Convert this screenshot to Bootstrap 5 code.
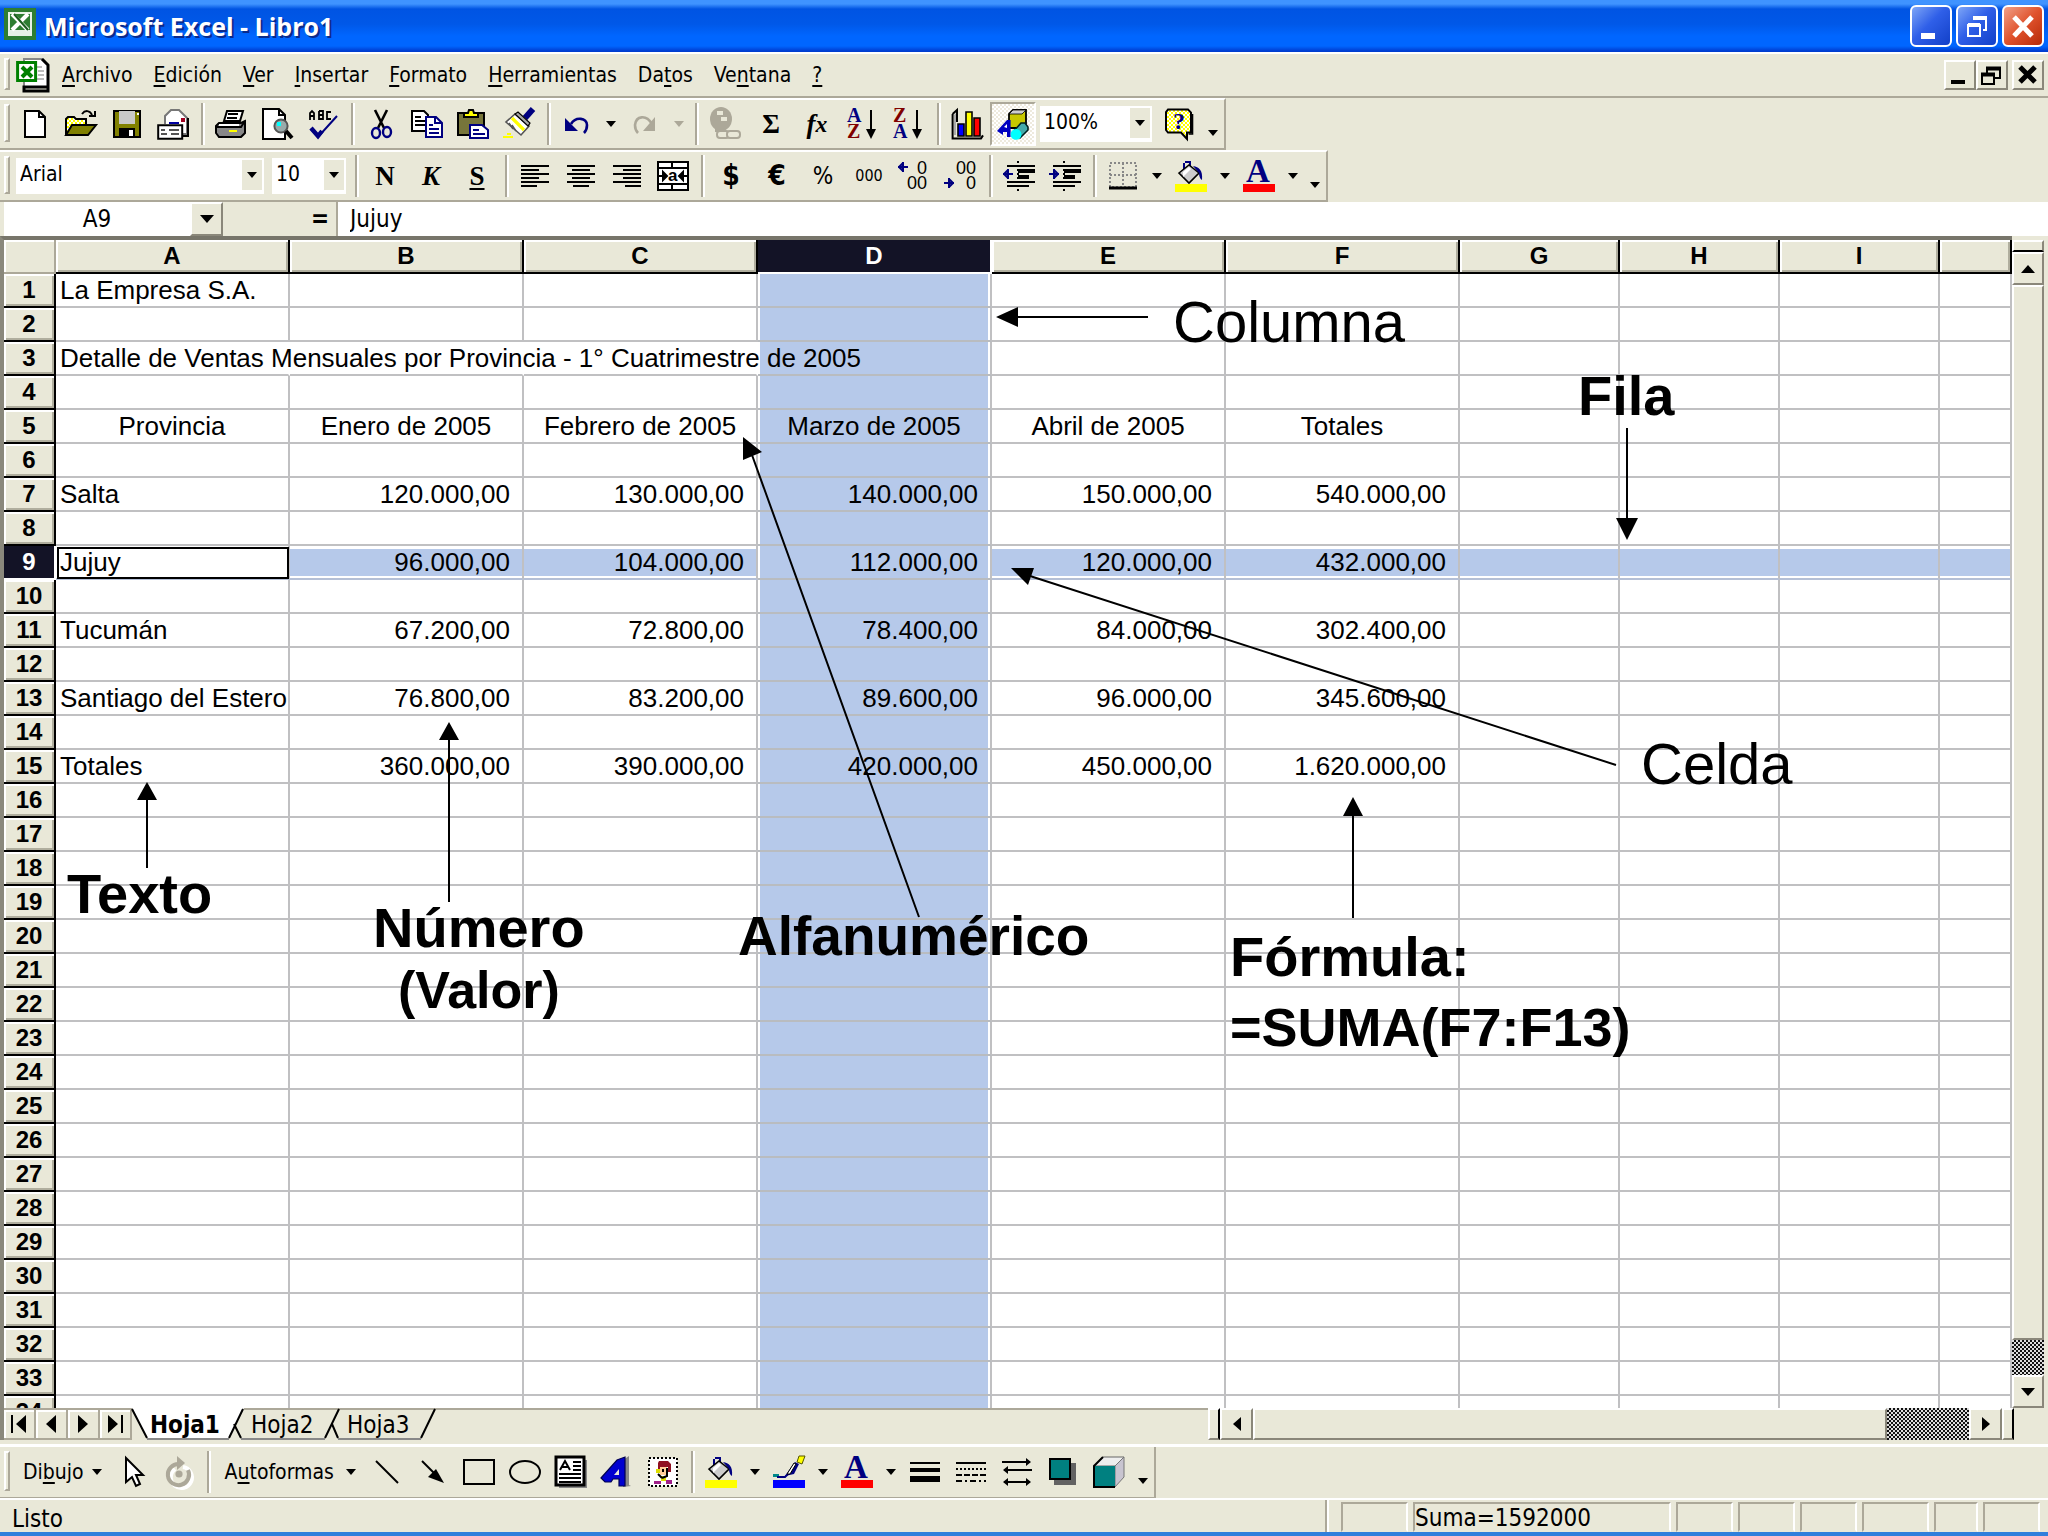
<!DOCTYPE html>
<html lang="es">
<head>
<meta charset="utf-8">
<meta name="viewport" content="width=device-width, initial-scale=1">
<title>Microsoft Excel - Libro1</title>
<link href="https://cdn.jsdelivr.net/npm/bootstrap@5.3.0/dist/css/bootstrap.min.css" rel="stylesheet">
<style>
:root{--face:#e9e8d8;--dark:#aca899;--sel:#b6c9ea;--line:#c0c0c2;--ui:"DejaVu Sans Condensed","DejaVu Sans",sans-serif;--arial:"Liberation Sans",Arial,sans-serif}
body{background:var(--face);color:#000;font:21px/24px var(--ui);height:100vh;overflow:hidden}
button,select,input{font-family:inherit;color:#000}
svg{display:block;flex:none;overflow:visible}
.pix{width:32px;height:32px}
/* title bar */
.titlebar{height:52px;background:linear-gradient(#3f93ff 0 4px,#0054e3 9px,#0058e8 24px,#0066ff 36px,#0066ff 46px,#003dd0 51px);padding:0 4px}
.titlebar h1{font:bold 25px/30px "Open Sans","Noto Sans",sans-serif;color:#fff;text-shadow:2px 2px 0 #0a2a8c}
.winbtn{width:42px;height:42px;border:2px solid #fff;border-radius:6px;padding:0;background:linear-gradient(135deg,#7ea6f7,#2f5fe8 45%,#1240c8)}
.winbtn.shut{background:linear-gradient(135deg,#f0a088,#e0522c 50%,#b52a08)}
.winbtn svg,.mdibtn svg{margin:auto}
/* menu */
.menubar{height:46px;border-top:2px solid #fff;border-bottom:2px solid var(--dark);padding:0 4px}
.menulinks{column-gap:21px}
.menubar a{color:#000;text-decoration:none}
.menubar u,.tb u{text-decoration-thickness:2px;text-underline-offset:3px}
.mdibtn,.raised{border:2px solid;border-color:#fff #8a877a #8a877a #fff;background:var(--face);padding:0;border-radius:0}
.mdibtn{width:32px;height:30px}
.grip{width:6px;align-self:stretch;margin:4px 2px 6px 4px;border:2px solid;border-color:#fff var(--dark) var(--dark) #fff;flex:none}
.toolbar{height:52px;border-top:2px solid #fff;border-bottom:2px solid var(--dark);border-right:2px solid var(--dark)}
.tb{width:46px;height:44px;padding:0;border:0;border-radius:0;background:none;display:flex;align-items:center;justify-content:center;flex:none;font-size:21px;line-height:24px}
.tb.arrowed{width:22px}
.tb.low{padding-top:18px}
.tb.wide{width:auto;padding:0 8px 0 11px;gap:8px}
.tb.wide.auto{gap:12px}
.tb.on{background:repeating-conic-gradient(#fff 0 25%,#eeeade 0 50%) 0 0/4px 4px;border:2px solid;border-color:var(--dark) #fff #fff var(--dark)}
.serif{font:bold 27px/30px "Liberation Serif",serif}
.sepline{width:12px;height:42px;flex:none;background:linear-gradient(90deg,transparent 5px,var(--dark) 5px 7px,#fff 7px 9px,transparent 9px)}
.combo{position:relative;height:36px;background:#fff;flex:none}
.combo.face{width:248px}
.combo.size{width:74px}
.combo.zoom{width:112px}
.combo select{appearance:none;border:0;background:none;width:100%;height:32px;padding:0 24px 0 4px;font-size:21px;line-height:24px;outline:0}
.combo .dd{position:absolute;right:2px;top:2px;width:20px;height:30px;background:var(--face);display:flex;align-items:center;justify-content:center;pointer-events:none}
/* formula bar */
.formulabar{height:34px;font-size:24px}
.formulabar input{border:0;border-radius:0;height:34px;padding:0;outline:0;font-size:24px;background:#fff}
.formulabar .content{padding-left:12px}
.namebox{width:186px;text-align:center}
.mid{width:115px;border-right:2px solid var(--dark);font-weight:bold;padding-right:7px}
/* sheet */
.pane{border-top:4px solid #77756a;border-left:4px solid #8a887c;background:#fff}
.sheet{border-collapse:separate;border-spacing:0;table-layout:fixed;width:100%;font:26px/32px var(--arial)}
.sheet td,.sheet th{height:34px;padding:0;white-space:nowrap;border:solid var(--line);border-width:0 2px 2px 0}
.sheet th{background:var(--face);font-size:24px;line-height:30px;text-align:center;border-color:#000;box-shadow:inset 2px 2px #fff,inset -2px -2px #b0ae9e}
.sheet .rowcol{width:52px}
.sheet .wcol{width:234px}
.sheet .ncol{width:160px}
.sheet .corner{box-shadow:inset 2px 2px #fff;border-color:var(--dark)}
.sheet th.cur{background:#131326;color:#fff;box-shadow:none;border-bottom-color:#fff;border-right-color:#fff}
.sheet td{padding:0 12px 0 4px}
.sheet .ctr{text-align:center;padding:0}
.sheet .num{text-align:right}
.sheet .wordcell{padding-right:0}
.sheet .spill{border-right-color:transparent}
.sheet tr.selrow td{background:linear-gradient(#fff 3px,var(--sel) 3px 30px,#fff 30px);border-bottom-color:#b4bfd6}
.sheet td.selcol,.sheet tr.selrow td.selcol{background:linear-gradient(90deg,#fff 2px,var(--sel) 2px 230px,#fff 230px);border-bottom-color:#b9bcc0}
.sheet tr.selrow td.active{background:#fff;outline:2px solid #000;outline-offset:-3px}
.notes{position:absolute;left:-4px;top:-4px;pointer-events:none}
.notes text{font-family:var(--arial);font-weight:bold}
.notes .plain{font-weight:normal}
/* scroll bars */
.vbar{width:36px;padding-right:4px}
.dither{background:repeating-conic-gradient(#111 0 25%,#ddd 0 50%) 0 0/4px 4px}
.vbar .splitter{height:12px;border-bottom-color:#000}
.vbar button{height:33px}
.vbar .dither{height:35px}
.tabrow{height:32px;border-left:4px solid #8a887c}
.tabrow .splitter{width:12px;border-right-color:#000}
.hbtn{width:33px}
.hthumb{width:634px}
.tabrow .dither{width:82px}
.tabrow .endgap{width:34px}
.navb{width:32px;height:32px;border:solid var(--dark);border-width:2px 2px 2px 0;box-shadow:inset 2px 2px #fff;background:none;padding:0;display:flex;align-items:center;justify-content:center}
.tabs{position:relative;border-top:2px solid var(--dark)}
.tabs svg{position:absolute;left:0;top:-2px}
.tabs a{position:relative;color:#000;text-decoration:none;font-size:24px;line-height:30px;width:96px;padding-left:8px}
.tabs a.now{font-weight:bold;width:111px;padding-left:18px}
.drawbar{height:54px;border-top:3px solid #fff}
.status{height:34px;border-top:2px solid #fff;font-size:24px;line-height:30px}
.boxes{gap:5px}
.cellbox{height:30px;margin-top:2px;border:2px solid;border-color:var(--dark) #fff transparent var(--dark);line-height:28px;width:57px}
.cellbox.wider{width:67px}
.cellbox.total{width:258px}
.cellbox.thin{width:44px}
.baseline{height:4px;background:#2f7fdc}
</style>
</head>
<body class="d-flex flex-column">
<svg width="0" height="0" class="position-absolute" aria-hidden="true">
 <defs>
  <symbol id="dn" viewBox="0 0 10 6"><path d="M0 0h10L5 6z"/></symbol>
  <pattern id="chk" width="2" height="2" patternUnits="userSpaceOnUse"><path fill="#fff" d="M0 0h2v2H0z"/><path fill="#ff0" d="M0 0h1v1H0zM1 1h1v1H1z"/></pattern>
  <pattern id="gry" width="1" height="1" patternUnits="userSpaceOnUse"><path fill="#fff" d="M0 0h1v1H0z"/><path fill="#222" d="M0 0h.5v.5H0zM.5 .5h.5v.5H.5z"/></pattern>
  <symbol id="bucket" viewBox="0 0 16 16"><path d="M5 1.500h2.500v5M4.500 6V2" fill="none" stroke="#000080"/><path d="M2 7l5-4 5 4-5 5z" fill="#ccc" stroke="#000" stroke-width=".8"/><path d="M4 6.500l3-2.500 1 1-4 4z" fill="#fff"/><path d="M9 3.500c3 .5 5 2 4.500 7-1-.5-1.500-2-1.500-3.500z" fill="#000080"/></symbol>
 </defs>
</svg>

<header class="titlebar d-flex align-items-center flex-shrink-0">
 <svg width="32" height="32" viewBox="0 0 16 16" class="mb-1"><path fill="#2e7d32" d="M0 0h16v16H0z"/><path fill="#e6f0e6" d="M2 2h12v12H2z"/><path d="M3 3h10v8H3z" fill="#2e7d32"/><path d="M4 3l8 8M12 3l-8 8" stroke="#fff" stroke-width="2"/><path d="M5 3l7 8" stroke="#1a5c1e"/></svg>
 <h1 class="mb-0 ms-2">Microsoft Excel - Libro1</h1>
 <div class="ms-auto d-flex gap-1">
  <button class="winbtn" aria-label="Minimizar"><svg width="34" height="34" viewBox="0 0 34 34"><path fill="#fff" d="M7 24h14v6H7z"/></svg></button>
  <button class="winbtn" aria-label="Restaurar"><svg width="34" height="34" viewBox="0 0 34 34" fill="none" stroke="#fff" stroke-width="2"><path d="M8 16h12v11H8z"/><path d="M8 16h12" stroke-width="4"/><path d="M14 11V9h12v12h-3" stroke-width="2"/><path d="M13 9h14" stroke-width="4"/></svg></button>
  <button class="winbtn shut" aria-label="Cerrar"><svg width="34" height="34" viewBox="0 0 34 34"><path d="M8 8l18 19M26 8L8 27" stroke="#fff" stroke-width="5"/></svg></button>
 </div>
</header>

<nav class="menubar d-flex align-items-center flex-shrink-0">
 <span class="grip ms-0"></span>
 <svg width="34" height="36" viewBox="0 0 17 18" class="ms-1"><path d="M4 1h9l3 3v11H4z" fill="#fff" stroke="#888"/><path d="M13 1l3 3v13H4v-2h12" fill="none" stroke="#000" stroke-width="1.500"/><path d="M10 5h3M11 7h3M11 9h3M10 11h4" stroke="#bbb"/><path fill="#fff" stroke="#008000" stroke-width="1.500" d="M.8 2.800h9v9h-9z"/><path d="M3 5l5 5M8 5l-5 5" stroke="#008000" stroke-width="2"/></svg>
 <div class="menulinks d-flex ps-1 ms-2">
  <a href="#"><u>A</u>rchivo</a><a href="#"><u>E</u>dición</a><a href="#"><u>V</u>er</a><a href="#"><u>I</u>nsertar</a><a href="#"><u>F</u>ormato</a><a href="#"><u>H</u>erramientas</a><a href="#">Da<u>t</u>os</a><a href="#">Ve<u>n</u>tana</a><a href="#"><u>?</u></a>
 </div>
 <div class="ms-auto d-flex">
  <button class="mdibtn" aria-label="Minimizar libro"><svg width="26" height="24"><path d="M4 17h14v4H4z"/></svg></button>
  <button class="mdibtn" aria-label="Restaurar libro"><svg width="26" height="24" fill="none" stroke="#000" stroke-width="2"><path d="M3 11h12v10H3zM8 11V5h13v10h-6"/><path d="M2 11.500h14M7 5.500h15" stroke-width="4"/></svg></button>
  <button class="mdibtn ms-1" aria-label="Cerrar libro"><svg width="26" height="24"><path d="M5 4l15 15M20 4L5 19" stroke="#000" stroke-width="5"/></svg></button>
 </div>
</nav>

<div class="d-flex flex-shrink-0">
<div class="toolbar d-flex align-items-center" role="toolbar" aria-label="Estándar">
 <span class="grip"></span>
 <button class="tb" aria-label="Nuevo"><svg class="pix" viewBox="0 0 16 16"><path d="M3 1.500h7l3 3v10H3z" fill="#fff" stroke="#000"/><path d="M10 1.500v3h3" fill="none" stroke="#000"/></svg></button>
 <button class="tb" aria-label="Abrir"><svg class="pix" viewBox="0 0 16 16"><path d="M.5 13.500V5.500l1-1h3l1 1h5v3" fill="url(#chk)" stroke="#000"/><path d="M.5 13.500l3-5h12l-4 5z" fill="#808000" stroke="#000"/><path d="M8.500 3c1.500-2 4-2 5 .5M15 1.500V4h-3" fill="none" stroke="#000"/></svg></button>
 <button class="tb" aria-label="Guardar"><svg class="pix" viewBox="0 0 16 16"><path d="M1.500 1.500h13v13H1.500z" fill="#808000" stroke="#000"/><path d="M4 1.500h8V8H4z" fill="#c8c8c8"/><path d="M4 10h8v4.500H4z"/><path fill="#fff" d="M9 11h2v3H9zM13 2.500h1v1h-1z"/></svg></button>
 <button class="tb" aria-label="Correo"><svg class="pix" viewBox="0 0 16 16"><path d="M4 8V4l3-3h4l4 4v8h-4" fill="#fff" stroke="#777"/><path d="M15.500 5v9H12" fill="none" stroke="#000"/><path fill="#a00020" d="M12 5h2v2h-2z"/><path stroke="#0000a0" d="M6 7.500h5"/><path d="M.6 8.600h12v6.800H.6z" fill="#fff" stroke="#000"/><path stroke="#555" d="M2 11h2M2 13h3M6 11h5M7 13h4"/></svg></button>
 <span class="sepline"></span>
 <button class="tb" aria-label="Imprimir"><svg class="pix" viewBox="0 0 16 16"><path d="M2 7.500h11l2-1v6l-2 2H2l-1.500-2V9z" fill="#888" stroke="#000"/><path d="M4.500 6.500l1.500-5h8l-1.500 5z" fill="#fff" stroke="#000"/><path d="M6.500 3h5M6 5h5" stroke="#000"/><path d="M1 9.500h12l2-3" fill="none" stroke="#000"/><path fill="#fff" d="M2 8h10v1H2z"/><path fill="#ff0" d="M7 11h4v1H7z"/></svg></button>
 <button class="tb" aria-label="Vista preliminar"><svg class="pix" viewBox="0 0 16 16"><path d="M1 .5h8l3 3v12H1z" fill="#fff" stroke="#000"/><path d="M9 .5v3h3" fill="none" stroke="#000"/><circle cx="10" cy="9" r="3.300" fill="#9aa" stroke="#555"/><path fill="#0ff" d="M8 7h2v2H8z"/><path d="M12.500 11.500l3 3.500" stroke="#000" stroke-width="2"/></svg></button>
 <button class="tb" aria-label="Ortografía"><svg class="pix" viewBox="0 0 16 16"><path d="M1.500 6V2.500l1-1 1 1V6M1.500 4h2M6 1.500V5.500h2v-2H6 8V1.500H6M12 2h-2v3.500h2" fill="none" stroke="#000" stroke-width=".9"/><path d="M2 10.500l3.500 4L15 4" fill="none" stroke="#000080"/><path d="M2 10l3.500 4 2-2.500" fill="none" stroke="#000080" stroke-width="2.200"/></svg></button>
 <span class="sepline"></span>
 <button class="tb" aria-label="Cortar"><svg class="pix" viewBox="0 0 16 16" fill="none"><path d="M5 1l4.500 9M11 1L6.500 10" stroke="#000" stroke-width="1.300"/><ellipse cx="5.500" cy="12.500" rx="2" ry="2.500" stroke="#000080" stroke-width="1.200"/><ellipse cx="11" cy="12" rx="2" ry="2.500" stroke="#000080" stroke-width="1.200"/></svg></button>
 <button class="tb" aria-label="Copiar"><svg class="pix" viewBox="0 0 16 16"><path d="M.5 1.500h6l2 2v8h-8z" fill="#fff" stroke="#000"/><path d="M2 4.500h3M2 6.500h5M2 8.500h5" stroke="#000"/><path d="M7.500 4.500h5l3 3v7h-8z" fill="#fff" stroke="#000080"/><path d="M12 4.500v3h3M9 8.500h2M9 10.500h5M9 12.500h5" stroke="#000080" fill="none"/></svg></button>
 <button class="tb" aria-label="Pegar"><svg class="pix" viewBox="0 0 16 16"><path d="M.5 2.500h13v11H.5z" fill="#77753a" stroke="#000"/><path d="M3.500 4.500v-2h2L6 1h2l.5 1.500h2v2z" fill="#ff0" stroke="#000"/><path d="M6.500 8.500h6l3 2.500v4h-9z" fill="#fff" stroke="#000080"/><path d="M8 11h3M8 13h6" stroke="#000080"/></svg></button>
 <button class="tb" aria-label="Copiar formato"><svg class="pix" viewBox="0 0 16 16"><path d="M11 5l4-4.500" stroke="#000080" stroke-width="3"/><path d="M6 3l7 6-4 4.500L1.500 7z" fill="#fff" stroke="#555" stroke-width=".8"/><path d="M6 3l6.500 6 1-1.500L7.500 2z" fill="#aaa" stroke="#000" stroke-width=".6"/><path d="M4.500 5l6 6" stroke="#ff0" stroke-width="1.600"/><path d="M3 7.500l2 3M4.500 8.500l2 3" stroke="#555" stroke-width=".7"/><path d="M0 14.500h5M2 13h2" stroke="#ff0"/></svg></button>
 <span class="sepline"></span>
 <button class="tb" aria-label="Deshacer"><svg class="pix" viewBox="0 0 16 16"><path d="M5 8c2.500-4 8-3 8 .5 0 2-.5 3-1.500 4" fill="none" stroke="#000080" stroke-width="1.300"/><path fill="#000080" d="M2 5v6.500h6.500z"/></svg></button>
 <button class="tb arrowed" aria-label="Lista deshacer"><svg width="10" height="6"><use href="#dn"/></svg></button>
 <button class="tb" aria-label="Rehacer"><svg class="pix" viewBox="0 0 16 16"><path d="M11.500 8c-3-5-8-4-8.500.5 0 2 .5 3 1.500 4" fill="none" stroke="#aca899" stroke-width="1.300"/><path fill="#aca899" d="M13 4.500v7H7z"/></svg></button>
 <button class="tb arrowed" aria-label="Lista rehacer"><svg width="10" height="6" fill="#aca899"><use href="#dn"/></svg></button>
 <span class="sepline"></span>
 <button class="tb" aria-label="Hipervínculo"><svg class="pix" viewBox="0 0 16 16"><ellipse cx="6" cy="5.500" rx="5.500" ry="6" fill="#aca899"/><path d="M4 1.500h3v2H4zM6 4.500h3v2H6z" fill="#e9e8d8"/><path d="M3 11h4l2 2" stroke="#aca899" stroke-width="2" fill="none"/><g fill="#e9e8d8" stroke="#aca899"><rect x="4" y="11.500" width="6" height="3.500" rx="1.500"/><rect x="9" y="11.500" width="6.500" height="3.500" rx="1.500"/></g></svg></button>
 <button class="tb serif" aria-label="Autosuma">Σ</button>
 <button class="tb serif" aria-label="Pegar función"><i>f</i><small><i>x</i></small></button>
 <button class="tb" aria-label="Orden ascendente"><svg class="pix" viewBox="0 0 16 16"><g font-family="Liberation Serif,serif" font-weight="bold" font-size="10"><text x="0" y="7" fill="#000080">A</text><text x="0" y="15" fill="#800000">Z</text></g><path d="M12 1v12" stroke="#000"/><path d="M9.500 10.500h5L12 15.500z"/></svg></button>
 <button class="tb" aria-label="Orden descendente"><svg class="pix" viewBox="0 0 16 16"><g font-family="Liberation Serif,serif" font-weight="bold" font-size="10"><text x="0" y="7" fill="#800000">Z</text><text x="0" y="15" fill="#000080">A</text></g><path d="M12 1v12" stroke="#000"/><path d="M9.500 10.500h5L12 15.500z"/></svg></button>
 <span class="sepline"></span>
 <button class="tb" aria-label="Gráficos"><svg class="pix" viewBox="0 0 16 16"><path d="M.8 3v12.200H15l1-1.500M.8 3L3 1v6" fill="none" stroke="#000"/><path d="M1.500 3.500l1-1v11h-1z" fill="#aaa"/><g stroke="#000" stroke-width=".8"><path fill="#00f" d="M3.500 8h3v6h-3z"/><path fill="#ff0" d="M7.500 2h3v12h-3z"/><path fill="#f00" d="M11.500 5h3v9h-3z"/></g></svg></button>
 <button class="tb on" aria-label="Dibujo"><svg class="pix" viewBox="0 0 16 16"><path d="M6 3l2-2h6.500v7l-2 2H6z" fill="#c8c800" stroke="#000" stroke-width=".9"/><path d="M6 3l2-2h6.500l-2 2z" fill="#ccc" stroke="#000" stroke-width=".4"/><path d="M0 11.500l5-5.500h1.800v8.500H5v-2.500H3v1.500z" fill="#0000c0"/><path d="M3.500 9.500L5 8v2z" fill="#fff"/><path d="M8 12l4-4.500h2l1.500 2V11l-4 4z" fill="#4aa" stroke="#022" stroke-width=".8"/><circle cx="9.500" cy="13.200" r="2.700" fill="#0ff"/></svg></button>
 <div class="combo zoom ms-1"><select aria-label="Zoom"><option>100%</option></select><span class="dd"><svg width="10" height="6"><use href="#dn"/></svg></span></div>
 <button class="tb ms-1" aria-label="Ayuda"><svg class="pix" viewBox="0 0 16 16"><path d="M2.500.8h10l1.500 1.500v10h-2v3.200l-3-3.200H2.500L1.500 11V2z" fill="url(#chk)" stroke="#000"/><path d="M14.800 3v10h-2" fill="none" stroke="#000" stroke-width=".7"/><text x="5" y="10.500" font-family="Liberation Serif,serif" font-weight="bold" font-size="12" fill="#000080">?</text></svg></button>
 <button class="tb arrowed low" aria-label="Más botones"><svg width="10" height="6"><use href="#dn"/></svg></button>
</div>
</div>

<div class="d-flex flex-shrink-0">
<div class="toolbar d-flex align-items-center" role="toolbar" aria-label="Formato">
 <span class="grip"></span>
 <div class="combo face ms-1 me-2"><select aria-label="Fuente"><option>Arial</option></select><span class="dd"><svg width="10" height="6"><use href="#dn"/></svg></span></div>
 <div class="combo size me-1"><select aria-label="Tamaño"><option>10</option></select><span class="dd"><svg width="10" height="6"><use href="#dn"/></svg></span></div>
 <span class="sepline"></span>
 <button class="tb serif" aria-label="Negrita">N</button>
 <button class="tb serif" aria-label="Cursiva"><i>K</i></button>
 <button class="tb serif" aria-label="Subrayado"><u>S</u></button>
 <span class="sepline"></span>
 <button class="tb" aria-label="Alinear a la izquierda"><svg width="28" height="22"><path d="M0 1h28M0 5h18M0 9h28M0 13h18M0 17h28M0 21h16" stroke="#000" stroke-width="2"/></svg></button>
 <button class="tb" aria-label="Centrar"><svg width="28" height="22"><path d="M0 1h28M5 5h18M0 9h28M5 13h18M0 17h28M6 21h16" stroke="#000" stroke-width="2"/></svg></button>
 <button class="tb" aria-label="Alinear a la derecha"><svg width="28" height="22"><path d="M0 1h28M10 5h18M0 9h28M10 13h18M0 17h28M12 21h16" stroke="#000" stroke-width="2"/></svg></button>
 <button class="tb" aria-label="Combinar y centrar"><svg width="32" height="30" fill="#fff" stroke="#000" stroke-width="2"><path d="M1 1h30v28H1zM1 7h30M1 23h30M15 1v6M15 23v6"/><path d="M2 15h7M30 15h-7M6 11l4 4-4 4zM26 11l-4 4 4 4z" fill="#000"/><text x="11" y="20" font-family="Liberation Sans" font-weight="bold" font-size="17" fill="#000" stroke="none">a</text></svg></button>
 <span class="sepline"></span>
 <button class="tb fs-3 fw-bold" aria-label="Moneda">$</button>
 <button class="tb fs-3 fw-bold" aria-label="Euro">€</button>
 <button class="tb fs-4" aria-label="Porcentaje">%</button>
 <button class="tb fs-6" aria-label="Estilo millares">000</button>
 <button class="tb" aria-label="Aumentar decimales"><svg width="34" height="32" font-family="Liberation Sans" font-size="18"><path d="M0 7h10M5 2v10M1 7l4-4M1 7l4 4" stroke="#000080" stroke-width="2"/><text x="19" y="14">0</text><text x="9" y="29">00</text></svg></button>
 <button class="tb" aria-label="Disminuir decimales"><svg width="34" height="32" font-family="Liberation Sans" font-size="18"><path d="M0 23h10M5 18v10M9 23l-4-4M9 23l-4 4" stroke="#000080" stroke-width="2"/><text x="12" y="14">00</text><text x="22" y="29">0</text></svg></button>
 <span class="sepline"></span>
 <button class="tb" aria-label="Disminuir sangría"><svg width="32" height="30" stroke="#000" stroke-width="2"><path d="M15 0v30" stroke-dasharray="2 2"/><path d="M4 5h28M4 21h28M4 25h22"/><path d="M15 10h17M15 16h11" stroke-width="4"/><path d="M0 13h10M5 8v10M1 13l4-4M1 13l4 4" stroke="#000080"/></svg></button>
 <button class="tb" aria-label="Aumentar sangría"><svg width="32" height="30" stroke="#000" stroke-width="2"><path d="M15 0v30" stroke-dasharray="2 2"/><path d="M4 5h28M4 21h28M4 25h22"/><path d="M15 10h17M15 16h11" stroke-width="4"/><path d="M0 13h10M5 8v10M9 13l-4-4M9 13l-4 4" stroke="#000080"/></svg></button>
 <span class="sepline"></span>
 <button class="tb" aria-label="Bordes"><svg width="28" height="28"><path d="M1 1h26v24H1zM14 1v24M1 13h26" fill="none" stroke="#888" stroke-width="2" stroke-dasharray="2 2"/><path d="M0 26h28" stroke="#000" stroke-width="3"/></svg></button>
 <button class="tb arrowed" aria-label="Lista bordes"><svg width="10" height="6"><use href="#dn"/></svg></button>
 <button class="tb" aria-label="Color de relleno"><svg width="32" height="34"><use href="#bucket" width="32" height="32"/><path fill="#ff0" d="M0 25h32v8H0z"/></svg></button>
 <button class="tb arrowed" aria-label="Lista relleno"><svg width="10" height="6"><use href="#dn"/></svg></button>
 <button class="tb" aria-label="Color de fuente"><svg width="32" height="34"><text x="3" y="23" font-family="Liberation Serif,serif" font-weight="bold" font-size="33" fill="#000080">A</text><path fill="red" d="M0 25h32v8H0z"/></svg></button>
 <button class="tb arrowed" aria-label="Lista color de fuente"><svg width="10" height="6"><use href="#dn"/></svg></button>
 <button class="tb arrowed low" aria-label="Más botones"><svg width="10" height="6"><use href="#dn"/></svg></button>
</div>
</div>

<div class="formulabar d-flex flex-shrink-0 ps-1">
 <input class="namebox" aria-label="Cuadro de nombres" value="A9">
 <button class="raised hbtn flex-shrink-0 d-flex align-items-center justify-content-center" aria-label="Nombres"><svg width="14" height="8" viewBox="0 0 14 8"><path d="M0 0h14L7 8z"/></svg></button>
 <div class="mid d-flex align-items-center justify-content-end flex-shrink-0">=</div>
 <input class="content flex-grow-1" aria-label="Barra de fórmulas" value="Jujuy">
</div>

<main class="flex-grow-1 d-flex overflow-hidden">
 <div class="pane flex-grow-1 position-relative overflow-hidden">
  <table class="sheet" id="sheet">
   <colgroup><col class="rowcol"><col class="wcol"><col class="wcol"><col class="wcol"><col class="wcol"><col class="wcol"><col class="wcol"><col class="ncol"><col class="ncol"><col class="ncol"><col></colgroup>
   <thead><tr><th class="corner"></th><th>A</th><th>B</th><th>C</th><th class="cur">D</th><th>E</th><th>F</th><th>G</th><th>H</th><th>I</th><th></th></tr></thead>
   <tbody></tbody>
  </table>
  <svg class="notes" width="2012" height="1172" viewBox="0 236 2012 1172" font-size="56">
   <g stroke="#000" stroke-width="2"><path d="M1148 317H1010M1627 428V525M919 917L752 455M1616 765L1030 576M449 902V738M147 868V798M1353 918V814"/></g>
   <path d="M996 317l22-10v20zM1627 540l-11-22h22zM743 437v23l19-8zM1011 568l23 0-6 17zM449 722l-10 18h20zM147 782l-10 18h20zM1353 797l-10 19h20z"/>
   <text x="1173" y="342" class="plain" font-size="58">Columna</text>
   <text x="1578" y="415">Fila</text>
   <text x="1641" y="784" class="plain" font-size="58">Celda</text>
   <text x="67" y="913">Texto</text>
   <text x="373" y="947">Número</text>
   <text x="398" y="1008" font-size="52">(Valor)</text>
   <text x="738" y="955" font-size="55">Alfanumérico</text>
   <text x="1230" y="976">Fórmula:</text>
   <text x="1230" y="1046" font-size="54">=SUMA(F7:F13)</text>
  </svg>
 </div>
 <div class="vbar d-flex flex-column flex-shrink-0 pt-1">
  <div class="raised splitter"></div>
  <button class="raised" aria-label="Arriba"><svg width="14" height="8" class="mx-auto"><path d="M0 8h14L7 0z"/></svg></button>
  <div class="raised flex-grow-1"></div>
  <div class="dither"></div>
  <button class="raised" aria-label="Abajo"><svg width="14" height="8" class="mx-auto"><path d="M0 0h14L7 8z"/></svg></button>
 </div>
</main>

<div class="tabrow d-flex flex-shrink-0">
 <button class="navb" aria-label="Primera hoja"><svg width="18" height="18"><path d="M1 0h2v18H1zM16 0v18L6 9z"/></svg></button>
 <button class="navb" aria-label="Hoja anterior"><svg width="18" height="18"><path d="M14 0v18L4 9z"/></svg></button>
 <button class="navb" aria-label="Hoja siguiente"><svg width="18" height="18"><path d="M4 0v18l10-9z"/></svg></button>
 <button class="navb" aria-label="Última hoja"><svg width="18" height="18"><path d="M15 0h2v18h-2zM2 0v18l10-9z"/></svg></button>
 <div class="tabs d-flex flex-grow-1">
  <svg width="320" height="32" fill="none"><path d="M0 0l15 30h82l15-30z" fill="#fff"/><path d="M0 1l15 29M97 30L111 1M102 16l7 14M193 30L207 1M200 16l6 14M289 30L303 1" stroke="#000" stroke-width="2"/><path d="M15 31h82M109 31h84M206 31h83" stroke="#888" stroke-width="2"/></svg>
  <a href="#" class="now">Hoja1</a><a href="#">Hoja2</a><a href="#">Hoja3</a>
 </div>
 <div class="raised splitter"></div>
 <button class="raised hbtn" aria-label="Izquierda"><svg width="8" height="14" class="mx-auto"><path d="M8 0v14L0 7z"/></svg></button>
 <div class="raised hthumb"></div>
 <div class="dither"></div>
 <button class="raised hbtn" aria-label="Derecha"><svg width="8" height="14" class="mx-auto"><path d="M0 0v14l8-7z"/></svg></button>
 <div class="raised splitter"></div>
 <div class="endgap"></div>
</div>

<div class="drawbar d-flex flex-shrink-0 mt-1">
<div class="toolbar border-top-0 d-flex align-items-center" role="toolbar" aria-label="Dibujo">
 <span class="grip"></span>
 <button class="tb wide"><span>Di<u>b</u>ujo</span><svg width="10" height="6"><use href="#dn"/></svg></button>
 <button class="tb" aria-label="Seleccionar"><svg class="pix" viewBox="0 0 16 16"><path d="M4.500 1v12l3-2.500 2 4.500 2-1-2-4.500h3.500z" fill="#fff" stroke="#000"/></svg></button>
 <button class="tb" aria-label="Girar"><svg class="pix" viewBox="0 0 16 16"><path d="M9 4.500a5.300 5.300 0 1 1-4 1" transform="translate(1 1)" fill="none" stroke="#fff" stroke-width="2"/><path d="M12.500 7a5.300 5.300 0 1 1-4.500-3" fill="none" stroke="#aca899" stroke-width="2"/><circle cx="8" cy="9" r="1.800" fill="#aca899"/><path fill="#aca899" d="M7 0l4 3.500L7 7z"/></svg></button>
 <span class="sepline"></span>
 <button class="tb wide auto"><span>A<u>u</u>toformas</span><svg width="10" height="6"><use href="#dn"/></svg></button>
 <button class="tb" aria-label="Línea"><svg width="24" height="24"><path d="M1 1l22 22" stroke="#000" stroke-width="2"/></svg></button>
 <button class="tb" aria-label="Flecha"><svg width="24" height="24"><path d="M1 1l16 16" stroke="#000" stroke-width="2"/><path d="M23 23l-16-6 8-8z"/></svg></button>
 <button class="tb" aria-label="Rectángulo"><svg width="32" height="26"><path d="M1 1h30v24H1z" fill="none" stroke="#000" stroke-width="2"/></svg></button>
 <button class="tb" aria-label="Elipse"><svg width="32" height="26"><ellipse cx="16" cy="13" rx="15" ry="11" fill="none" stroke="#000" stroke-width="2"/></svg></button>
 <button class="tb" aria-label="Cuadro de texto"><svg width="32" height="32"><path d="M4 4h28v28H4z" fill="#888"/><path d="M1 1h28v28H1z" fill="#fff" stroke="#000" stroke-width="3"/><path d="M5 14l5-9 5 9M7 11h6M18 6h8M18 10h8M18 14h8M4 18h22M4 22h22M4 26h22" fill="none" stroke="#000" stroke-width="2"/></svg></button>
 <button class="tb" aria-label="WordArt"><svg class="pix" viewBox="0 0 16 16"><path d="M11 2l3-2v14.500l1 .5-4 .5z" fill="#888"/><path d="M0 11L8 2l4-1.500V15H9v-3.500H6L5 13H2z" fill="#0000d0" stroke="#000050" stroke-width=".6"/><path d="M6.500 9.500L9 6.500v3z" fill="#e9e8d8"/></svg></button>
 <button class="tb" aria-label="Imagen"><svg width="30" height="30"><path d="M1 1h28v28H1z" fill="#fff" stroke="#000" stroke-width="2" stroke-dasharray="2 2"/><path d="M11 4h9l3 3v8h-3v-5h-7v3h-3V6z" fill="#901020"/><path d="M12 10h7v8h-7z" fill="#fc9"/><path d="M8 12h4v4H8zM13 19h5v5h-5z" fill="#dd0"/><path d="M6 24h7v3H6zM18 23h6v4h-6z" fill="#a0208a"/><path d="M19 11v8l-5 2M10 17l4 4M15 12v3" stroke="#000" stroke-width="2" fill="none"/></svg></button>
 <span class="sepline"></span>
 <button class="tb" aria-label="Relleno"><svg width="32" height="34"><use href="#bucket" width="32" height="32"/><path fill="#ff0" d="M0 25h32v8H0z"/></svg></button>
 <button class="tb arrowed" aria-label="Lista relleno"><svg width="10" height="6"><use href="#dn"/></svg></button>
 <button class="tb" aria-label="Color de línea"><svg width="32" height="34"><path d="M0 19h6v3H0z" fill="#088"/><path d="M4 22h8l6-6" stroke="#000080" stroke-width="2" fill="none"/><path d="M12 21l10-14 4 2-5 10z" fill="#000080"/><path d="M14 19l7-11 2 1-6 10z" fill="#fff" stroke="#000" stroke-width="1"/><path d="M24 7l2-6h6l-3 8z" fill="#ff0" stroke="#550" stroke-width="1"/><path fill="#00f" d="M0 25h32v8H0z"/></svg></button>
 <button class="tb arrowed" aria-label="Lista color de línea"><svg width="10" height="6"><use href="#dn"/></svg></button>
 <button class="tb" aria-label="Color de fuente"><svg width="32" height="34"><text x="3" y="23" font-family="Liberation Serif,serif" font-weight="bold" font-size="33" fill="#000080">A</text><path fill="red" d="M0 25h32v8H0z"/></svg></button>
 <button class="tb arrowed" aria-label="Lista color de fuente"><svg width="10" height="6"><use href="#dn"/></svg></button>
 <button class="tb" aria-label="Estilo de línea"><svg width="30" height="24"><path d="M0 2h30v2H0zM0 8h30v4H0zM0 16h30v6H0z"/></svg></button>
 <button class="tb" aria-label="Estilo de guión"><svg width="30" height="24" stroke="#000" stroke-width="2"><path d="M0 3h30"/><path d="M0 9h30" stroke-dasharray="2 2"/><path d="M0 15h30" stroke-dasharray="6 2"/><path d="M0 21h30" stroke-dasharray="6 3 2 3"/></svg></button>
 <button class="tb" aria-label="Estilo de flecha"><svg width="30" height="32" stroke="#000" stroke-width="2"><path d="M0 6h28M2 14h28M2 26h26"/><path d="M24 2l5 4-5 4zM6 10l-5 4 5 4zM6 22l-5 4 5 4zM24 22l5 4-5 4z" stroke="none"/></svg></button>
 <button class="tb" aria-label="Sombra"><svg width="28" height="28"><path d="M5 5h22v22H5z" fill="url(#gry)"/><path d="M5 5h22v22H5z" fill="#444" opacity=".6"/><path d="M1 1h20v20H1z" fill="#008080" stroke="#000" stroke-width="2"/></svg></button>
 <button class="tb" aria-label="3D"><svg width="32" height="32"><path d="M1 10L10 1h21L22 10z" fill="#eee" stroke="#666"/><path d="M22 10l9-9v20l-9 10z" fill="#c8c4d0" stroke="#777"/><path d="M1 10h21v21H1z" fill="#008080"/><path d="M10 1l-9 9v21h21" fill="none" stroke="#000" stroke-width="2"/></svg></button>
 <button class="tb arrowed low" aria-label="Más botones"><svg width="10" height="6"><use href="#dn"/></svg></button>
</div>
</div>

<footer class="status d-flex flex-shrink-0 overflow-hidden">
 <span class="ps-2 ms-1 pt-1">Listo</span>
 <div class="boxes ms-auto d-flex pe-2">
  <span class="sepline me-1"></span>
  <span class="cellbox wider"></span><span class="cellbox total">Suma=1592000</span><span class="cellbox"></span><span class="cellbox"></span><span class="cellbox"></span><span class="cellbox wider"></span><span class="cellbox thin"></span><span class="cellbox"></span>
 </div>
</footer>
<div class="baseline flex-shrink-0"></div>

<script src="https://cdn.jsdelivr.net/npm/bootstrap@5.3.0/dist/js/bootstrap.bundle.min.js"></script>
<script>
const data = {
  1: ["La Empresa S.A."],
  3: ["Detalle de Ventas Mensuales por Provincia - 1° Cuatrimestre de 2005"],
  5: ["Provincia", "Enero de 2005", "Febrero de 2005", "Marzo de 2005", "Abril de 2005", "Totales"],
  7: ["Salta", "120.000,00", "130.000,00", "140.000,00", "150.000,00", "540.000,00"],
  9: ["Jujuy", "96.000,00", "104.000,00", "112.000,00", "120.000,00", "432.000,00"],
  11: ["Tucumán", "67.200,00", "72.800,00", "78.400,00", "84.000,00", "302.400,00"],
  13: ["Santiago del Estero", "76.800,00", "83.200,00", "89.600,00", "96.000,00", "345.600,00"],
  15: ["Totales", "360.000,00", "390.000,00", "420.000,00", "450.000,00", "1.620.000,00"]
};
const body = document.querySelector("#sheet tbody");
for (let r = 1; r <= 34; r++) {
  const tr = body.insertRow();
  if (r === 9) tr.className = "selrow";
  const th = document.createElement("th");
  th.textContent = r;
  if (r === 9) th.className = "cur";
  tr.append(th);
  for (let c = 0; c < 10; c++) {
    const td = tr.insertCell();
    td.textContent = (data[r] || [])[c] || "";
    if (r === 5) td.classList.add("ctr");
    else td.classList.add(c > 0 ? "num" : "wordcell");
    if (c === 3) td.classList.add("selcol");
    if (r === 3 && c < 3) td.classList.add("spill");
    if (r === 9 && c === 0) td.classList.add("active");
  }
}
</script>
</body>
</html>
